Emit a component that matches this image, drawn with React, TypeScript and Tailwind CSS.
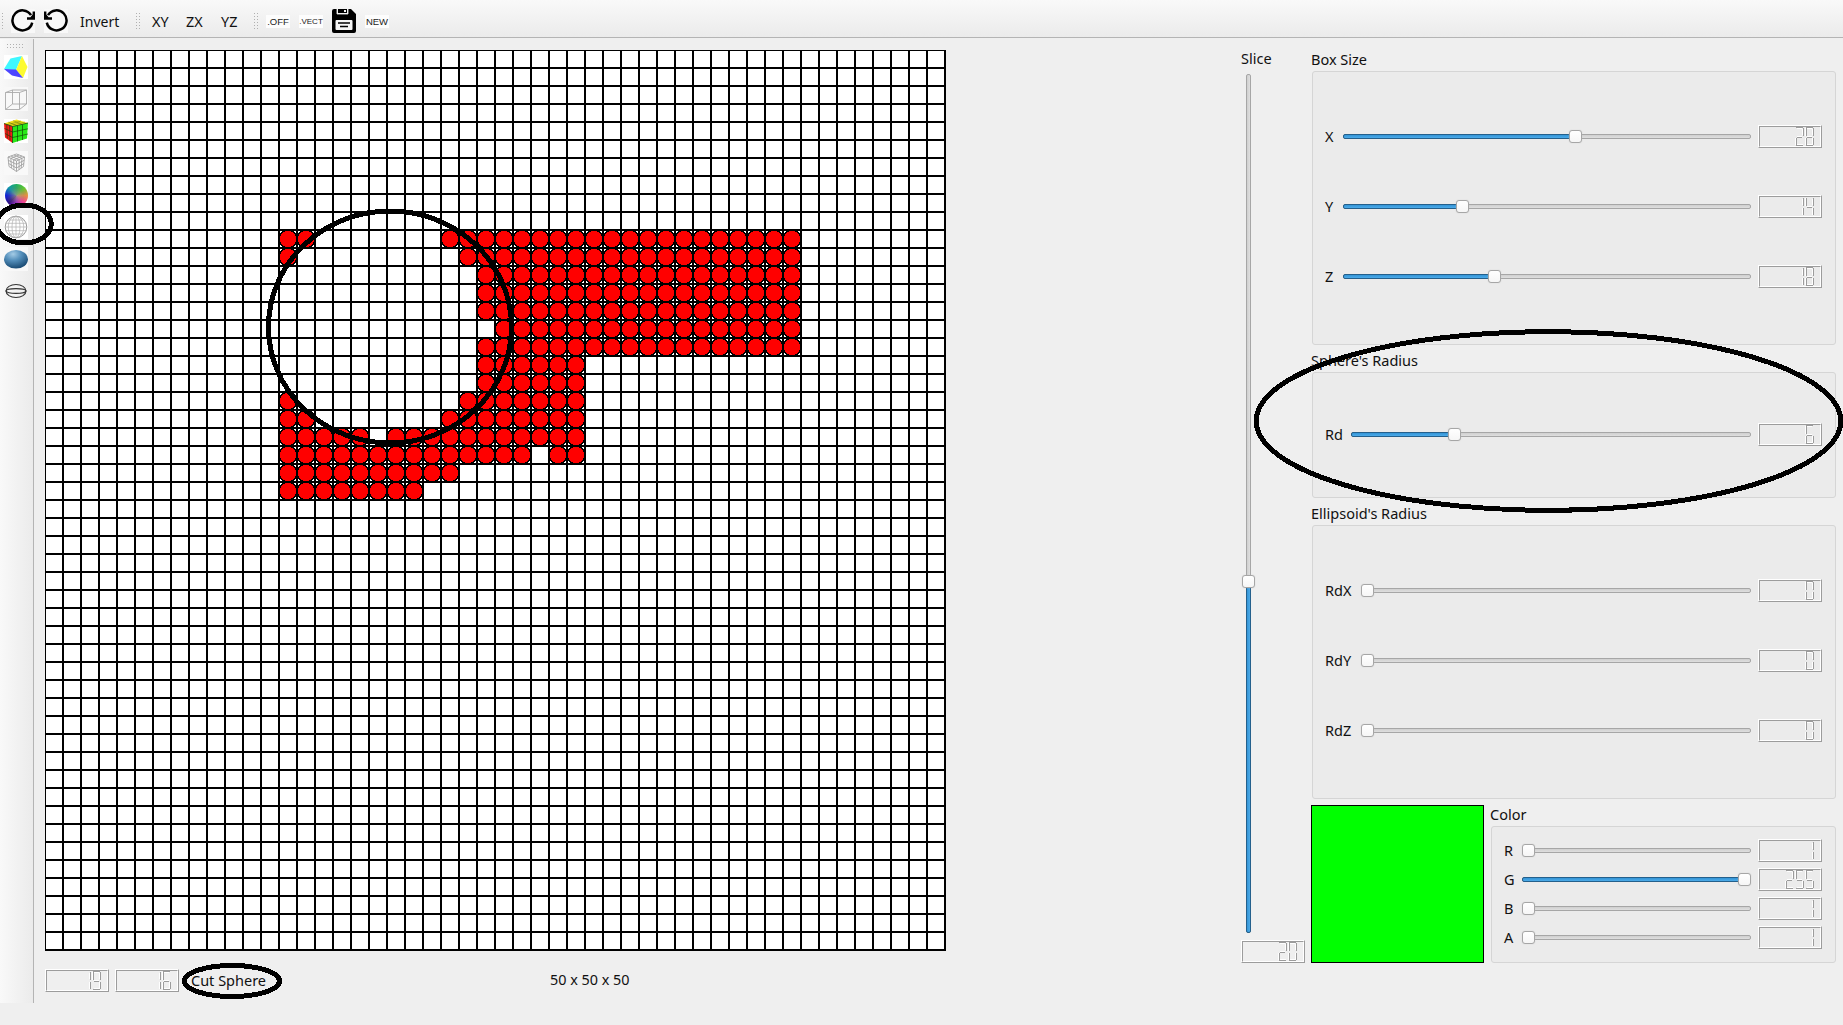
import React from "react";

const SEGMENTS: Record<string, string> = {
  "0": "abcdef", "1": "bc", "2": "abged", "3": "abgcd", "4": "fgbc",
  "5": "afgcd", "6": "afgedc", "7": "abc", "8": "abcdefg", "9": "abcdfg",
};

// [x, y, width, height] of the dark edge followed by the light edge
const SEG_RECTS: Record<string, number[][]> = {
  a: [[1, 0, 7, 1], [2, 1, 5, 1]],
  b: [[8, 1, 1, 8], [7, 2, 1, 6]],
  c: [[8, 11, 1, 7], [7, 11, 1, 7]],
  d: [[1, 18, 7, 1], [2, 17, 6, 1]],
  e: [[1, 11, 1, 7], [0, 11, 1, 7]],
  f: [[1, 1, 1, 8], [0, 1, 1, 8]],
  g: [[2, 10, 5, 1], [2, 9, 5, 1]],
};

function Lcd({ value }: { value: string }) {
  return (
    <div className="h-[23px] w-16 shrink-0 border border-t-white border-l-white border-r-[#9c9c9c] border-b-[#9c9c9c]">
      <div className="h-full w-full border border-t-[#9c9c9c] border-l-[#9c9c9c] border-r-white border-b-white">
        <svg width="60" height="19" viewBox="0 0 60 19" shapeRendering="crispEdges" className="block">
          {value.split("").map((ch, i) => (
            <g key={i} transform={`translate(${45 - (value.length - 1 - i) * 10} 0)`}>
              {SEGMENTS[ch].split("").map((s) => {
                const [d, l] = SEG_RECTS[s];
                return (
                  <g key={s}>
                    <rect x={l[0]} y={l[1]} width={l[2]} height={l[3]} fill="#ffffff" />
                    <rect x={d[0]} y={d[1]} width={d[2]} height={d[3]} fill="#9c9c9c" />
                  </g>
                );
              })}
            </g>
          ))}
        </svg>
      </div>
    </div>
  );
}

const handleClass =
  "absolute h-[13px] w-[13px] rounded-[3px] border border-[#a6a6a6] bg-linear-to-b from-white to-[#f6f6f6] shadow-[0_0_1px_#bdbdbd]";

function Slider({ fill, handle }: { fill?: boolean; handle: number }) {
  return (
    <div className="relative flex h-[13px] flex-1 items-center">
      <div className="h-[5px] w-full rounded-[2px] border border-[#a6a6a6] bg-linear-to-b from-[#cfcfcf] to-[#dfdfdf]" />
      {fill && (
        <div
          className="absolute left-0 h-[5px] rounded-[2px] border border-[#24608c] bg-linear-to-b from-[#3394d6] to-[#4cabe9]"
          style={{ width: handle + 4 }}
        />
      )}
      <div className={handleClass} style={{ left: handle }} />
    </div>
  );
}

function Row({ label, labelClass, value, handle, fill }: {
  label: string; labelClass: string; value: string; handle: number; fill?: boolean;
}) {
  return (
    <div className="flex h-[23px] items-center">
      <div className={`${labelClass} pb-[2px]`}>{label}</div>
      <Slider handle={handle} fill={fill} />
      <div className="w-[7px]" />
      <Lcd value={value} />
    </div>
  );
}

const panel = "flex flex-col rounded-[3px] border border-[#d5d5d5] bg-[#ebebeb] pl-3 pr-[13px]";

const RUNS: [number, number, number][] = [
  [10, 13, 14], [10, 22, 41], [11, 13, 13], [11, 23, 41], [12, 24, 41], [13, 24, 41],
  [14, 24, 41], [15, 25, 41], [16, 24, 41], [17, 24, 29], [18, 24, 29], [19, 13, 13],
  [19, 23, 29], [20, 13, 14], [20, 22, 29], [21, 13, 17], [21, 19, 29], [22, 13, 26],
  [22, 28, 29], [23, 13, 22], [24, 13, 20],
];

function Grid() {
  const lines = Array.from({ length: 51 }, (_, k) => k * 18);
  const cells = RUNS.flatMap(([r, a, b]) => Array.from({ length: b - a + 1 }, (_, i) => [r, a + i]));
  return (
    <svg width="901" height="901" viewBox="0 0 901 901" shapeRendering="crispEdges" className="block">
      <rect width="901" height="901" fill="#fff" />
      {lines.map((p) => (
        <g key={p} fill="#000">
          <rect x={p - 1} y="0" width="2" height="901" />
          <rect x="0" y={p - 1} width="901" height="2" />
        </g>
      ))}
      {cells.map(([r, c]) => (
        <circle key={`${r}-${c}`} cx={c * 18 + 9} cy={r * 18 + 9} r="9" fill="#f00" stroke="#000" strokeWidth="1.5" />
      ))}
    </svg>
  );
}

function Dots({ cols, rows }: { cols: number; rows: number }) {
  const items = Array.from({ length: cols * rows }, (_, i) => [i % cols, Math.floor(i / cols)]);
  return (
    <svg width={cols * 3 - 2} height={rows * 3 - 2} shapeRendering="crispEdges" className="block shrink-0">
      {items.map(([x, y]) => (
        <rect key={`${x}-${y}`} x={x * 3} y={y * 3} width="1" height="1" fill="#b0b0b0" />
      ))}
    </svg>
  );
}

function Rotate({ flip }: { flip?: boolean }) {
  return (
    <svg width="24" height="24" viewBox="0 0 24 24" className="block bg-[#f8f8f8]">
      <g transform={flip ? "translate(24 0) scale(-1 1)" : undefined}>
        <path d="M20 6.2A10 10 0 1 0 21.2 13.6" fill="none" stroke="#000" strokeWidth="2.5" />
        <path d="M24 2.5v8.2h-8V8.2h3.4L21.6 5.5V2.5z" fill="#000" />
      </g>
    </svg>
  );
}

function SaveIcon() {
  return (
    <svg width="24" height="24" viewBox="0 0 24 24" className="block">
      <path d="M2 0h3v5h11V0h3l5 5v17a2 2 0 0 1-2 2H2a2 2 0 0 1-2-2V2a2 2 0 0 1 2-2z" fill="#000" />
      <path d="M5 0v5h11V0" fill="none" stroke="#f4f4f4" strokeWidth=".8" />
      <path d="M6 0h9v4H6z" fill="#000" />
      <path d="M12 1h2v2h-2z" fill="#f4f4f4" />
      <rect x="3.5" y="11" width="17" height="10" rx="1" fill="#f4f4f4" />
      <path d="M6 14h12M8 17.5h8" stroke="#000" strokeWidth="1.3" />
    </svg>
  );
}

const rubikLines = (
  <>
    <path d="M0 4.5 8.5 7.5 24 4M8.5 7.5V24" />
    <path d="M4.3 3 12.6 6.5M9 1.6 18 5.2M2.8 5.7 17 2.1M5.6 6.5 21 3" strokeOpacity=".4" />
    <path d="M13.5 6.6V22.5M18.5 5.5V21M8.5 13 24 9.8M8.5 18.5 24 15M2.8 5.7 3.3 19.5M5.6 6.5 6 21.7M.5 9.5 8.5 13M1 14.5 8.5 18.5" strokeOpacity=".8" />
  </>
);

function ShapeIcons() {
  const box = "block shrink-0 bg-white";
  return (
    <div className="flex flex-col gap-2">
      <svg width="24" height="24" className={box}>
        <path d="M6.5 3.5 18 1 12 15 0 14z" fill="#3ff8ff" />
        <path d="M18 1 23.5 12 19 23 12 15z" fill="#fdfb30" />
        <path d="M0 14 12 14.5 19 23 8 20.5z" fill="#4c45ff" />
      </svg>
      <svg width="24" height="24" className="block shrink-0 bg-[#f8f8f8]" fill="none" stroke="#a9a9a9">
        <path d="M1.5 5.5h14v17h-14zM8.5 3h14v14h-14zM1.5 5.5l7-2.5M15.5 5.5l7-2.5M15.5 22.5l7-5.5M1.5 22.5l7-5.5" strokeWidth=".9" />
      </svg>
      <svg width="24" height="24" className={box}>
        <path d="M0 4.5 12.5.5 24 4 8.5 7.5z" fill="#f4e018" />
        <path d="M0 4.5 8.5 7.5V24L1 18.5z" fill="#f81818" />
        <path d="M8.5 7.5 24 4 23 19.5 8.5 24z" fill="#28e818" />
        <g fill="none" stroke="#10400a" strokeWidth=".8">{rubikLines}</g>
      </svg>
      <svg width="24" height="24" className="block shrink-0 bg-[#f9f9f9]">
        <g fill="none" stroke="#999" strokeWidth=".8">
          <path d="M4 6 12.5 3 20.5 6 12.5 10zM4 6 5 15.5 12.5 20.5 19.5 15.5 20.5 6M12.5 10V20.5M7 5l8 4M10 4l8 3.3M15 4 7 7.3M18 5 10 9M6.8 7.5 7.5 17M9.6 9 10 18.8M15.2 9 15 18.8M18 7.5 17.2 17M4.3 9.3 12.5 13.3 20.2 9.3M4.6 12.5 12.5 17 20 12.5" />
        </g>
      </svg>
      <div className="flex h-6 w-6 items-center justify-center bg-white">
        <div className="h-[23px] w-[23px] rounded-full bg-[radial-gradient(circle,rgba(160,150,130,0.8)_0%,rgba(130,120,120,0.2)_45%,transparent_65%),conic-gradient(from_0deg,#20b060,#60c830,#e89040,#f84098,#a020d0,#301080,#1020d8,#1098a8,#20b060)]" />
      </div>
      <svg width="24" height="24" className={box} fill="none" stroke="#b0b0b0" strokeWidth=".7">
        <circle cx="12" cy="12" r="10.8" stroke="#999" strokeWidth="1" />
        <ellipse cx="12" cy="12" rx="7.8" ry="10.8" />
        <ellipse cx="12" cy="12" rx="4" ry="10.8" />
        <path d="M12 1v22M1 12h22M2 8.3h20M4 5h16M2 15.7h20M4 19h16" />
      </svg>
      <svg width="24" height="24" className="block shrink-0 bg-[#f8f8f8]">
        <defs>
          <radialGradient id="ball" cx=".38" cy=".22" r=".75">
            <stop offset="0" stopColor="#a4cbe6" />
            <stop offset=".45" stopColor="#5590bc" />
            <stop offset="1" stopColor="#1d4f78" />
          </radialGradient>
        </defs>
        <ellipse cx="12" cy="12.3" rx="12" ry="9.3" fill="url(#ball)" />
      </svg>
      <svg width="24" height="24" className="block shrink-0" fill="none" stroke="#333" strokeWidth="1.1">
        <ellipse cx="12" cy="12" rx="10" ry="6.5" />
        <ellipse cx="12" cy="12" rx="10" ry="2.4" />
      </svg>
    </div>
  );
}

function Marks() {
  return (
    <svg
      width="1843" height="1025" viewBox="0 0 1843 1025" shapeRendering="crispEdges"
      className="pointer-events-none absolute left-0 top-0" fill="none" stroke="#000" strokeWidth="5"
    >
      <ellipse cx="390" cy="327" rx="121.5" ry="116" />
      <ellipse cx="24" cy="224" rx="27.3" ry="19" />
      <ellipse cx="232" cy="981" rx="47.5" ry="15.5" />
      <ellipse cx="1548.5" cy="421" rx="292.3" ry="89.3" />
    </svg>
  );
}

export default function App() {
  return (
    <div className="relative flex h-[1025px] w-[1843px] flex-col overflow-hidden bg-[#efefef] font-['Noto_Sans',sans-serif] text-[14.5px] leading-[20px] text-[#111]">
      <div className="flex h-[38px] shrink-0 items-center border-b border-[#b4b4b4] bg-linear-to-b from-[#f9f9f9] to-[#ebebeb] pt-[5px] pl-[2px] text-[14.4px]">
        <Dots cols={1} rows={6} />
        <div className="ml-2 flex gap-[9px]">
          <Rotate />
          <Rotate flip />
        </div>
        <div className="ml-3 w-14 pt-px text-[14px]">Invert</div>
        <Dots cols={2} rows={6} />
        <div className="ml-3 w-[34px] pt-px">XY</div>
        <div className="w-[35px] pt-px">ZX</div>
        <div className="w-[33px] pt-px">YZ</div>
        <Dots cols={2} rows={6} />
        <div className="ml-2 flex items-center gap-[9px] font-['Liberation_Sans',sans-serif] text-[9.5px] leading-[13px] whitespace-nowrap text-[#222]">
          <div className="w-6 bg-[#fdfdfd] text-center">.OFF</div>
          <div className="flex w-6 justify-center bg-[#fdfdfd] text-[8px]">.VECT</div>
          <SaveIcon />
          <div className="flex w-6 justify-center bg-[#fdfdfd]">NEW</div>
        </div>
      </div>

      <div className="flex min-h-0 flex-1">
        <div className="mt-px flex h-[964px] w-[34px] shrink-0 flex-col border-r border-[#b4b4b4] bg-linear-to-r from-[#f9f9f9] to-[#ebebeb] pt-[5px]">
          <div className="pl-[7px]"><Dots cols={6} rows={2} /></div>
          <div className="pt-[7px] pl-1"><ShapeIcons /></div>
        </div>

        <div className="ml-[11px] w-[901px] shrink-0 pt-3">
          <Grid />
          <div className="mt-[18px] flex h-[23px] items-center">
            <Lcd value="19" />
            <div className="w-[6px]" />
            <Lcd value="16" />
            <div className="ml-3 w-[359px] pb-[2px]">Cut Sphere</div>
            <div className="pb-px text-[14.4px] whitespace-nowrap">50 x 50 x 50</div>
          </div>
        </div>

        <div className="ml-[295px] flex w-16 shrink-0 flex-col pt-[10px]">
          <div className="h-[26px]">Slice</div>
          <div className="relative ml-[5px] h-[859px] w-[5px] rounded-[2px] border border-[#a6a6a6] bg-linear-to-r from-[#cfcfcf] to-[#dfdfdf]">
            <div className="absolute -left-px top-[506px] h-[352px] w-[5px] rounded-[2px] border border-[#24608c] bg-linear-to-r from-[#3394d6] to-[#4cabe9]" />
            <div className={`${handleClass} top-[500px] left-[-5px]`} />
          </div>
          <div className="h-[7px]" />
          <Lcd value="20" />
        </div>

        <div className="ml-[6px] flex w-[525px] flex-col">
          <div className="h-[33px] pt-[11px]">Box Size</div>
          <div className={`${panel} ml-px h-[274px] gap-[47px] pt-[53px]`}>
            <Row label="X" labelClass="w-[18px]" value="28" handle={226} fill />
            <Row label="Y" labelClass="w-[18px]" value="14" handle={113} fill />
            <Row label="Z" labelClass="w-[18px]" value="18" handle={145} fill />
          </div>
          <div className="h-[27px] pt-[5px]">Sphere's Radius</div>
          <div className={`${panel} ml-px h-[126px] pt-[50px]`}>
            <Row label="Rd" labelClass="w-[26px]" value="6" handle={97} fill />
          </div>
          <div className="h-[27px] pt-[5px]">Ellipsoid's Radius</div>
          <div className={`${panel} ml-px h-[274px] gap-[47px] pt-[53px]`}>
            <Row label="RdX" labelClass="w-9" value="0" handle={0} />
            <Row label="RdY" labelClass="w-9" value="0" handle={0} />
            <Row label="RdZ" labelClass="w-9" value="0" handle={0} />
          </div>
          <div className="mt-[6px] flex h-[158px]">
            <div className="w-[173px] shrink-0 border border-black bg-[#00ff00]" />
            <div className="ml-[6px] flex flex-1 flex-col">
              <div className="relative -top-px h-[21px]">Color</div>
              <div className={`${panel} ml-px h-[137px] gap-[6px] pt-3`}>
                <Row label="R" labelClass="w-[18px]" value="1" handle={0} />
                <Row label="G" labelClass="w-[18px]" value="255" handle={216} fill />
                <Row label="B" labelClass="w-[18px]" value="1" handle={0} />
                <Row label="A" labelClass="w-[18px]" value="1" handle={0} />
              </div>
            </div>
          </div>
        </div>
      </div>
      <Marks />
    </div>
  );
}
